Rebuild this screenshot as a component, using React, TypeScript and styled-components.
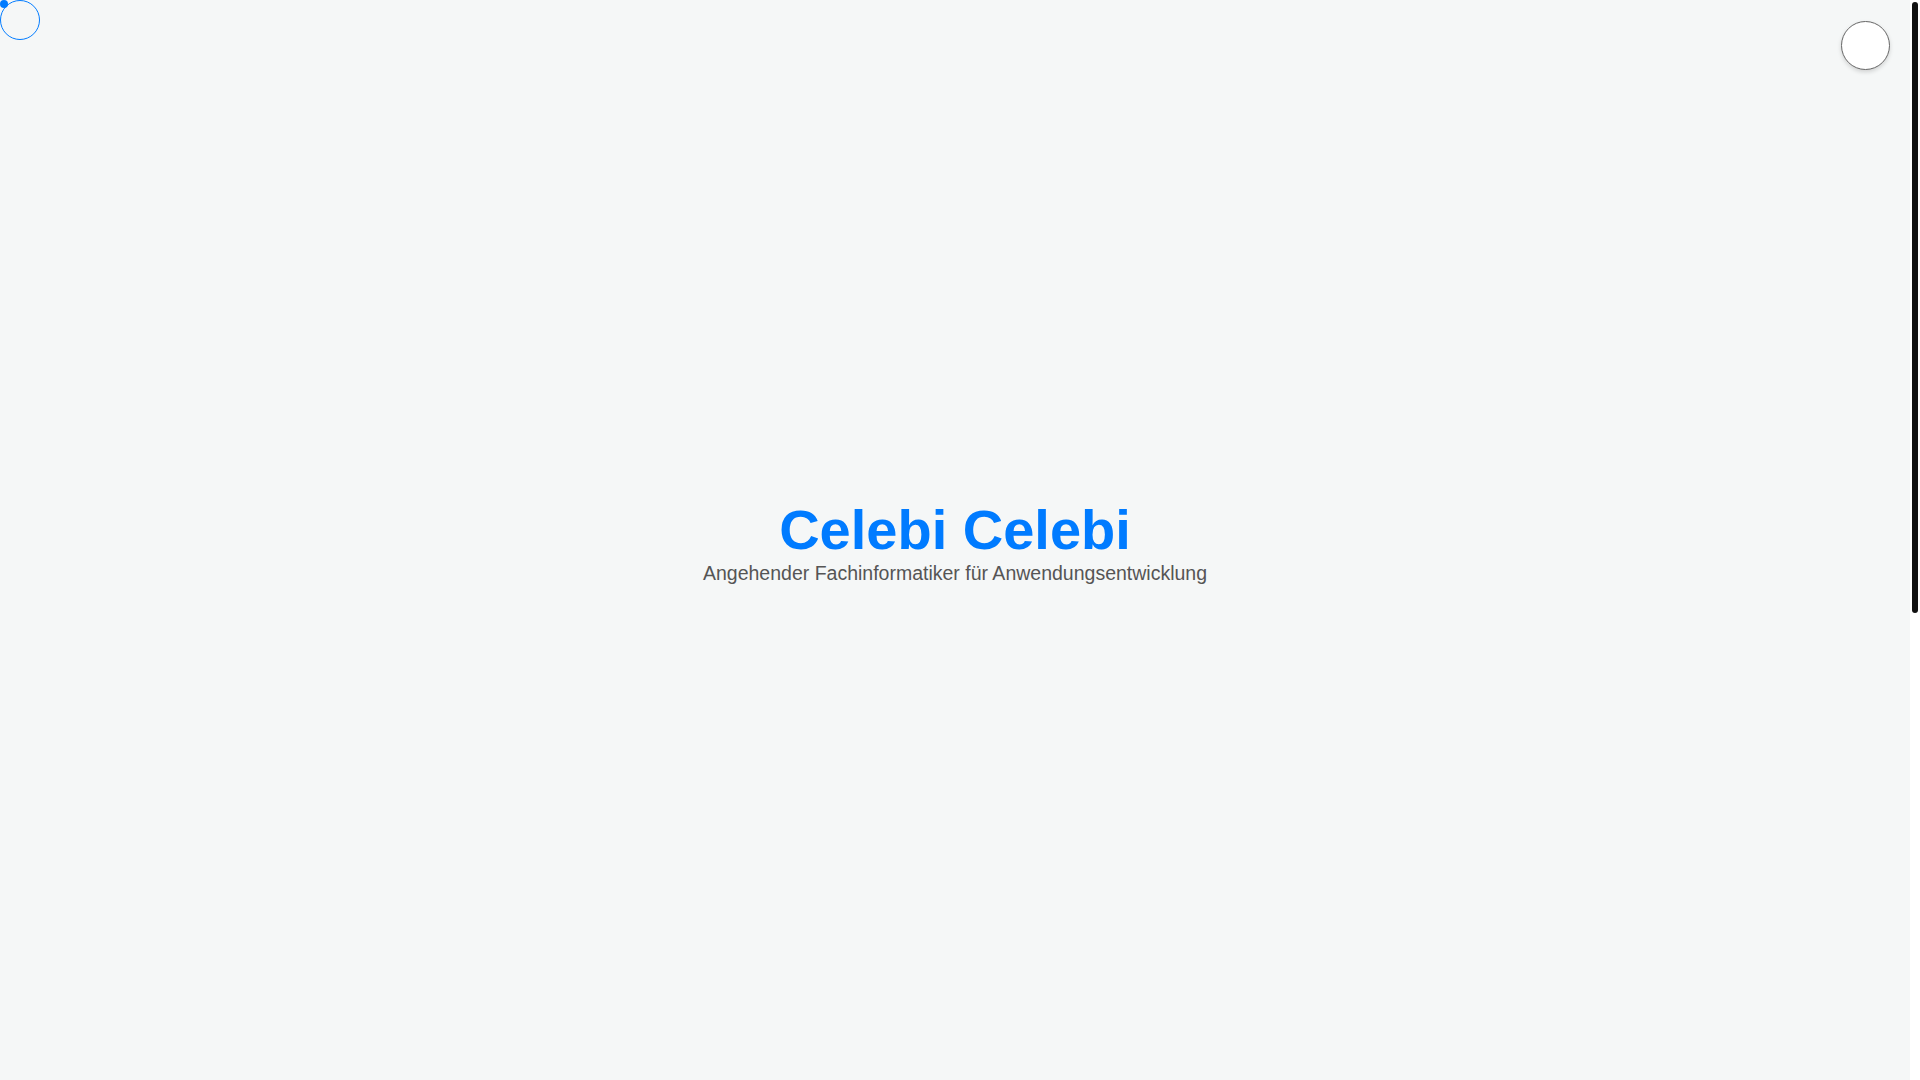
import { createGlobalStyle, styled } from "styled-components";

const GlobalStyle = createGlobalStyle`
	* {
		box-sizing: border-box;
	}
	html, body {
		margin: 0;
		padding: 0;
		height: 100%;
		overflow: hidden;
	}
	body {
		background: #f5f7f7;
		font-family: "Liberation Sans", Arial, sans-serif;
		color: #333;
	}
	#root {
		height: 100%;
	}
`

const Shell = styled.div`
	display: flex;
	height: 100vh;
`

const Page = styled.div`
	flex: 1;
	height: 100vh;
	overflow-y: auto;
	scrollbar-width: none;

	&::-webkit-scrollbar {
		display: none;
	}
`

const ScrollRail = styled.div`
	width: 10px;
	flex-shrink: 0;
	background: #fff;
	padding: 2px;
`

const ScrollThumb = styled.div<{ $height: number }>`
	height: ${(p) => p.$height}px;
	background: #111;
	border-radius: 3px;
`

const CursorRing = styled.div`
	position: fixed;
	top: 0;
	left: 0;
	width: 40px;
	height: 40px;
	border: 1.5px solid #007bff;
	border-radius: 50%;
	pointer-events: none;
	z-index: 1000;
`

const CursorDot = styled.div`
	position: fixed;
	top: 0;
	left: 0;
	width: 8px;
	height: 8px;
	background: #007bff;
	border-radius: 50%;
	pointer-events: none;
	z-index: 1001;
`

const ThemeToggle = styled.button`
	position: fixed;
	top: 21px;
	right: 30px;
	width: 49px;
	height: 49px;
	border-radius: 50%;
	border: 1px solid #666;
	background: #fff;
	box-shadow: 0 2px 4px rgba(0, 0, 0, 0.15);
	cursor: pointer;
	z-index: 900;
`

const Hero = styled.header`
	min-height: 100vh;
	padding-top: 4px;
	display: flex;
	flex-direction: column;
	align-items: center;
	justify-content: center;
	text-align: center;
`

const Title = styled.h1`
	margin: 0;
	font-size: 56px;
	font-weight: 700;
	color: #007bff;
	line-height: 1.1;
`

const Subtitle = styled.p`
	margin: 1px 0 0;
	font-size: 19.5px;
	color: #555;
`

const Section = styled.section`
	min-height: 820px;
`

export default function App() {
	return (
		<Shell>
			<GlobalStyle />
			<CursorRing />
			<CursorDot />
			<ThemeToggle type="button" aria-label="Theme wechseln" />
			<Page>
				<Hero>
					<Title>Celebi Celebi</Title>
					<Subtitle>Angehender Fachinformatiker für Anwendungsentwicklung</Subtitle>
				</Hero>
				<Section />
			</Page>
			<ScrollRail>
				<ScrollThumb $height={611} />
			</ScrollRail>
		</Shell>
	)
}
